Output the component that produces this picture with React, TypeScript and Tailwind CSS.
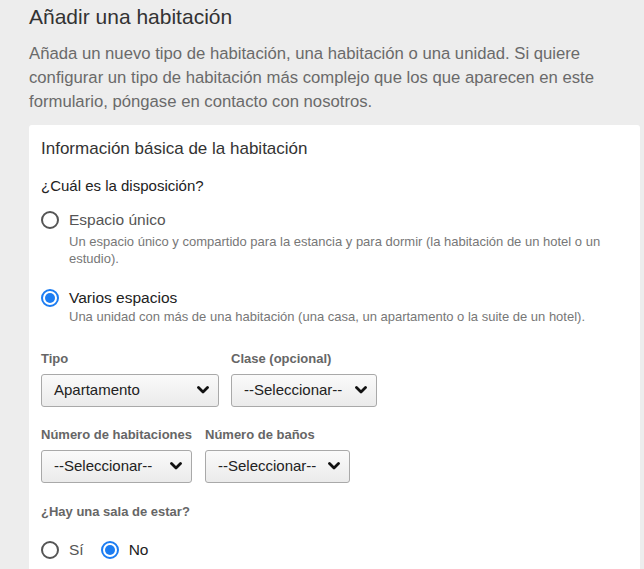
import { useState } from "react"

function Chevron() {
  return (
    <svg width="12" height="8" viewBox="0 0 12 8" className="shrink-0">
      <polyline
        points="1.5,1.5 6,6 10.5,1.5"
        fill="none"
        stroke="#111"
        strokeWidth="2.8"
        strokeLinecap="round"
        strokeLinejoin="round"
      />
    </svg>
  )
}

function Radio({ checked }: { checked: boolean }) {
  return checked ? (
    <span className="flex h-[18px] w-[18px] shrink-0 items-center justify-center rounded-full border-2 border-[#1c7df2]">
      <span className="h-[10px] w-[10px] rounded-full bg-[#1c7df2]" />
    </span>
  ) : (
    <span className="h-[18px] w-[18px] shrink-0 rounded-full border-2 border-[#555]" />
  )
}

function Select({ value, width }: { value: string; width: string }) {
  return (
    <div
      className={`flex h-[33px] items-center justify-between rounded-[3px] border border-[#a9a9a9] bg-gradient-to-b from-[#fafafa] to-[#ebebeb] pl-[12px] pr-[9px] text-[15px] text-[#222] ${width}`}
    >
      <span>{value}</span>
      <Chevron />
    </div>
  )
}

export default function App() {
  const [layout, setLayout] = useState("varios")
  const [living, setLiving] = useState("no")

  return (
    <div className="flex h-screen flex-col overflow-hidden bg-[#ededed] pl-[29px] pr-[4px] pt-[5px] font-['Liberation_Sans',Arial,sans-serif]">
      <h1 className="text-[21px] leading-6 text-[#333]">Añadir una habitación</h1>
      <p className="mt-[13px] pr-[20px] text-[16.7px] leading-6 text-[#6a6a6a]">
        Añada un nuevo tipo de habitación, una habitación o una unidad. Si quiere
        configurar un tipo de habitación más complejo que los que aparecen en este
        formulario, póngase en contacto con nosotros.
      </p>
      <div className="mt-[11px] flex-1 rounded-t-[3px] bg-white pl-[12px] pr-[20px] pt-[14px]">
        <div className="text-[17px] leading-5 text-[#333]">Información básica de la habitación</div>
        <div className="mt-[17px] text-[15px] leading-5 text-[#222]">¿Cuál es la disposición?</div>

        <label className="mt-[14px] flex cursor-pointer gap-[10px]" onClick={() => setLayout("unico")}>
          <span className="flex h-5 items-center">
            <Radio checked={layout === "unico"} />
          </span>
          <span>
            <span className="block text-[15.5px] leading-5 text-[#555]">Espacio único</span>
            <span className="mt-[2.5px] block text-[13px] leading-[17px] text-[#777]">
              Un espacio único y compartido para la estancia y para dormir (la habitación de un hotel o un
              estudio).
            </span>
          </span>
        </label>

        <label className="mt-[21px] flex cursor-pointer gap-[10px]" onClick={() => setLayout("varios")}>
          <span className="flex h-5 items-center">
            <Radio checked={layout === "varios"} />
          </span>
          <span>
            <span className="block text-[15.5px] leading-5 text-[#222]">Varios espacios</span>
            <span className="mt-[0.5px] block text-[13px] leading-[17px] text-[#777]">
              Una unidad con más de una habitación (una casa, un apartamento o la suite de un hotel).
            </span>
          </span>
        </label>

        <div className="mt-[26px] flex gap-[12px]">
          <div>
            <div className="text-[13px] font-bold leading-4 text-[#666]">Tipo</div>
            <div className="mt-[6.5px]">
              <Select value="Apartamento" width="w-[178px]" />
            </div>
          </div>
          <div>
            <div className="text-[13px] font-bold leading-4 text-[#666]">Clase (opcional)</div>
            <div className="mt-[6.5px]">
              <Select value="--Seleccionar--" width="w-[146px]" />
            </div>
          </div>
        </div>

        <div className="mt-[20.5px] flex gap-[13px]">
          <div className="w-[151px]">
            <div className="whitespace-nowrap text-[13px] font-bold leading-4 text-[#666]">Número de habitaciones</div>
            <div className="mt-[6.5px]">
              <Select value="--Seleccionar--" width="w-[151px]" />
            </div>
          </div>
          <div>
            <div className="text-[13px] font-bold leading-4 text-[#666]">Número de baños</div>
            <div className="mt-[6.5px]">
              <Select value="--Seleccionar--" width="w-[145px]" />
            </div>
          </div>
        </div>

        <div className="mt-[21px] text-[13px] font-bold leading-4 text-[#666]">¿Hay una sala de estar?</div>
        <div className="mt-[20px] flex items-center">
          <label className="flex cursor-pointer items-center gap-[10px]" onClick={() => setLiving("si")}>
            <Radio checked={living === "si"} />
            <span className="text-[15.5px] leading-5 text-[#555]">Sí</span>
          </label>
          <label className="ml-[17px] flex cursor-pointer items-center gap-[10px]" onClick={() => setLiving("no")}>
            <Radio checked={living === "no"} />
            <span className="text-[15.5px] leading-5 text-[#222]">No</span>
          </label>
        </div>
      </div>
    </div>
  )
}
